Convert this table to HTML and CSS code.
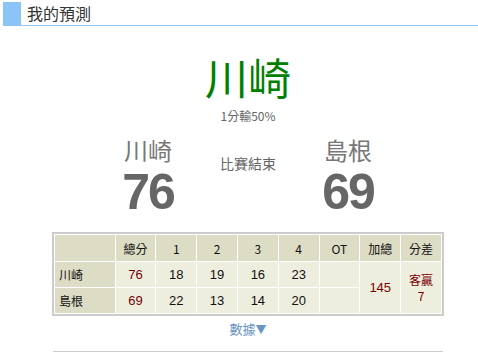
FILE: index.html
```html
<!DOCTYPE html>
<html>
<head>
<meta charset="utf-8">
<link rel="stylesheet" href="styles.css">
</head>
<body>
<div class="head">
  <span class="mark"></span>
  <span class="title">我的預測</span>
</div>
<div class="wrap">
  <div class="pick">川崎</div>
  <div class="odds">1分輸50%</div>
  <div class="score">
    <div class="team">
      <div class="name">川崎</div>
      <div class="pts">76</div>
    </div>
    <div class="status">比賽結束</div>
    <div class="team">
      <div class="name">島根</div>
      <div class="pts">69</div>
    </div>
  </div>
  <table class="box">
    <tr class="hd">
      <th class="first"></th><th>總分</th><th>1</th><th>2</th><th>3</th><th>4</th><th>OT</th><th>加總</th><th>分差</th>
    </tr>
    <tr>
      <th class="first">川崎</th><td class="red">76</td><td>18</td><td>19</td><td>16</td><td>23</td><td></td>
      <td class="red" rowspan="2">145</td><td class="red diff" rowspan="2">客贏<br>7</td>
    </tr>
    <tr>
      <th class="first">島根</th><td class="red">69</td><td>22</td><td>13</td><td>14</td><td>20</td><td></td>
    </tr>
  </table>
  <div class="more">數據<span class="tri">▼</span></div>
  <div class="rule"></div>
</div>
</body>
</html>
```
FILE: styles.css
```css
body {
  margin: 0;
  font-family: "Noto Sans CJK TC", "DejaVu Sans", sans-serif;
  background: #fff;
}
.head {
  display: flex;
  align-items: stretch;
  margin: 2px 0 0 3px;
  height: 23px;
  border-bottom: 1px solid #8cc4f8;
}
.mark {
  width: 18px;
  background: #8cc4f8;
}
.title {
  padding-left: 6px;
  font-size: 16px;
  line-height: 23px;
  color: #333;
}
.wrap {
  width: 392px;
  margin: 0 0 0 52px;
  display: flex;
  flex-direction: column;
  align-items: center;
}
.pick {
  margin-top: 26px;
  font-size: 43px;
  line-height: 48px;
  color: #008000;
}
.odds {
  margin-top: 10px;
  font-size: 12px;
  line-height: 12px;
  color: #666;
}
.score {
  display: flex;
  align-items: flex-start;
  margin-top: 13px;
}
.team {
  width: 120px;
  display: flex;
  flex-direction: column;
  align-items: center;
}
.name {
  font-size: 24px;
  line-height: 30px;
  color: #777;
}
.pts {
  margin-top: 2px;
  font-family: "Liberation Sans", Arial, sans-serif;
  font-weight: bold;
  font-size: 50px;
  line-height: 50px;
  letter-spacing: -2px;
  color: #666;
}
.status {
  width: 80px;
  margin-top: 19px;
  text-align: center;
  font-size: 14px;
  line-height: 18px;
  color: #666;
}
.box {
  margin-top: 15px;
  width: 392px;
  border: 2px solid #ccc;
  border-collapse: separate;
  border-spacing: 1px;
  background: #fff;
}
.box th, .box td {
  height: 25px;
  padding: 0;
  text-align: center;
  font-weight: normal;
  color: #111;
}
.box td {
  background: #eeeedf;
  width: 40px;
  font-family: "Liberation Sans", "Noto Sans CJK TC", sans-serif;
  font-size: 13px;
}
.box th {
  background: #ddddc5;
  font-family: "Noto Sans CJK TC", sans-serif;
  font-size: 12px;
}
.box .hd th {
  height: 26px;
}
.box th.first {
  width: 56px;
  text-align: left;
  padding-left: 4px;
}
.box .red {
  color: #7a0000;
}
.box .diff {
  font-family: "Noto Sans CJK TC", sans-serif;
  font-size: 12px;
  line-height: 16px;
}
.more {
  margin-top: 5px;
  font-size: 13px;
  line-height: 16px;
  color: #6b95c4;
}
.tri {
  font-size: 11px;
}
.rule {
  margin-top: 14px;
  width: 390px;
  height: 1px;
  background: #ccc;
}
```
